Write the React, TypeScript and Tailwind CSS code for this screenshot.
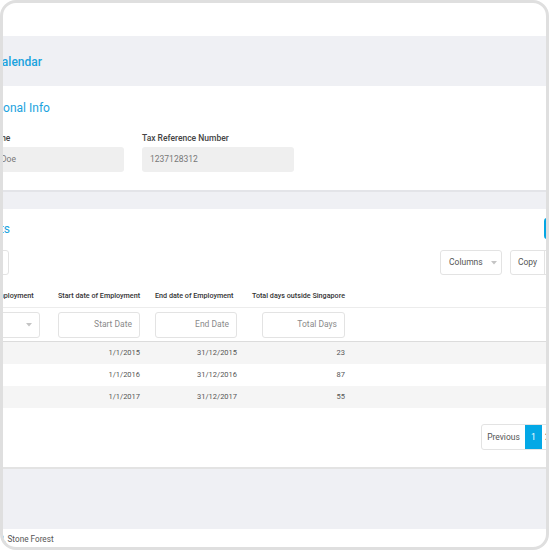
import React from 'react';

const rows = [
  { country: 'Malaysia', start: '1/1/2015', end: '31/12/2015', days: '23' },
  { country: 'Japan', start: '1/1/2016', end: '31/12/2016', days: '87' },
  { country: 'China', start: '1/1/2017', end: '31/12/2017', days: '55' },
];

function Caret() {
  return (
    <svg width="6" height="4" viewBox="0 0 6 4" className="shrink-0">
      <path d="M0 0 L6 0 L3 3.5 Z" fill="#c4c4c4" />
    </svg>
  );
}

export default function App() {
  return (
    <div className="w-[552px] h-[552px] bg-white">
      <div className="w-[549px] h-[550px] rounded-[16px] border-[3px] border-[#dfdfdf] overflow-hidden bg-white font-['Roboto','Liberation_Sans',sans-serif]">
        <div className="-ml-[60px] w-[680px] flex flex-col">
          {/* top bar */}
          <div className="h-[33px]" />

          {/* page title */}
          <div className="h-[50px] bg-[#eff0f4] flex items-center pl-[29px] pt-[1px]">
            <h1 className="text-[12px] leading-[14px] font-medium text-[#1ba3de]">Tax Calendar</h1>
          </div>

          {/* Personal Info */}
          <section className="pt-[15px] pb-[18px] border-b-2 border-[#e3e4e8]">
            <h2 className="pl-[36px] text-[12px] leading-[14px] text-[#1ba3de]">Personal Info</h2>
            <div className="mt-[18px] pl-[29px] flex gap-[18px]">
              <div className="w-[152px]">
                <p className="text-[8.5px] leading-[10px] font-medium text-[#444]">Full Name</p>
                <div className="mt-[4px] h-[25px] rounded-[3px] bg-[#efefef] flex items-center pl-[8px] text-[8.5px] text-[#777]">
                  John Doe
                </div>
              </div>
              <div className="w-[152px]">
                <p className="text-[8.5px] leading-[10px] font-medium text-[#444]">Tax Reference Number</p>
                <div className="mt-[4px] h-[25px] rounded-[3px] bg-[#efefef] flex items-center pl-[8px] text-[8.5px] text-[#777]">
                  1237128312
                </div>
              </div>
            </div>
          </section>

          <div className="h-[17px] bg-[#eff0f4]" />

          {/* Employment card */}
          <section className="pt-[9px] pb-[17px] border-b-2 border-[#e3e3e3]">
            <div className="h-[21px] flex items-center pl-[29px] pr-[39px]">
              <h2 className="-ml-[35px] text-[12px] leading-[14px] text-[#1ba3de]">Employments</h2>
              <button className="ml-auto w-[40px] h-[21px] rounded-[3px] bg-[#05a6e3] text-white text-[8.5px]">
                Add
              </button>
            </div>

            <div className="mt-[11px] h-[25px] flex pl-[29px] pr-[39px]">
              <div className="w-[37px] h-[25px] rounded-[3px] border border-[#e3e3e3]" />
              <button className="ml-auto w-[62px] h-[25px] rounded-[3px] border border-[#e3e3e3] flex items-center pl-[8px] gap-[8px] text-[8.5px] text-[#555]">
                Columns
                <Caret />
              </button>
              <div className="ml-[8px] flex h-[25px] rounded-[3px] border border-[#e3e3e3] text-[8.5px] text-[#555]">
                <span className="w-[34px] flex items-center justify-center border-r border-[#e3e3e3]">Copy</span>
                <span className="w-[38px] flex items-center justify-center">Excel</span>
              </div>
            </div>

            {/* table */}
            <div className="mt-[10px] ml-[7px]">
              <div className="h-[23px] flex items-center pl-[8px] border-b border-[#ececec] text-[7.2px] font-medium text-[#333]">
                <div className="w-[82px] mr-[18px] whitespace-nowrap">Country of Employment</div>
                <div className="w-[82px] mr-[15px] whitespace-nowrap">Start date of Employment</div>
                <div className="w-[82px] mr-[15px] whitespace-nowrap">End date of Employment</div>
                <div className="w-[93px] whitespace-nowrap">Total days outside Singapore</div>
              </div>
              <div className="h-[34px] flex items-center pl-[8px] border-b border-[#dcdcdc] text-[8.5px] text-[#8a8a8a]">
                <div className="w-[82px] mr-[18px] h-[26px] rounded-[3px] border border-[#e3e3e3] flex items-center justify-end pr-[7px]">
                  <Caret />
                </div>
                <div className="w-[82px] mr-[15px] h-[26px] rounded-[3px] border border-[#e3e3e3] flex items-center justify-end pr-[7px]">
                  Start Date
                </div>
                <div className="w-[82px] mr-[15px] h-[26px] rounded-[3px] border border-[#e3e3e3] flex items-center justify-end pr-[7px]">
                  End Date
                </div>
                <div className="w-[93px] flex justify-end">
                  <div className="w-[83px] h-[26px] rounded-[3px] border border-[#e3e3e3] flex items-center justify-end pr-[7px]">
                    Total Days
                  </div>
                </div>
              </div>
              {rows.map((r, i) => (
                <div
                  key={r.start}
                  className={`h-[22px] flex items-center pl-[8px] text-[7.5px] text-[#555] ${i % 2 === 0 ? 'bg-[#f5f5f5]' : 'bg-white'}`}
                >
                  <div className="w-[82px] mr-[18px]">{r.country}</div>
                  <div className="w-[82px] mr-[15px] text-right">{r.start}</div>
                  <div className="w-[82px] mr-[15px] text-right">{r.end}</div>
                  <div className="w-[93px] text-right">{r.days}</div>
                </div>
              ))}
            </div>

            {/* pagination */}
            <div className="mt-[16px] h-[26px] flex pl-[29px] pr-[33px]">
              <div className="ml-auto flex h-[26px] rounded-[3px] border border-[#e3e3e3] text-[8.5px] text-[#555]">
                <span className="w-[43px] flex items-center justify-center">Previous</span>
                <span className="w-[17px] flex items-center justify-center bg-[#03a8e6] text-white">1</span>
                <span className="w-[17px] flex items-center pl-[3px]">2</span>
                <span className="w-[30px] flex items-center justify-center">Next</span>
              </div>
            </div>
          </section>

          <div className="h-[60px] bg-[#eff0f4]" />

          {/* footer */}
          <footer className="h-[21px] flex items-center pl-[34px] text-[8.2px] text-[#555]">
            © 2018, Stone Forest
          </footer>
        </div>
      </div>
    </div>
  );
}
